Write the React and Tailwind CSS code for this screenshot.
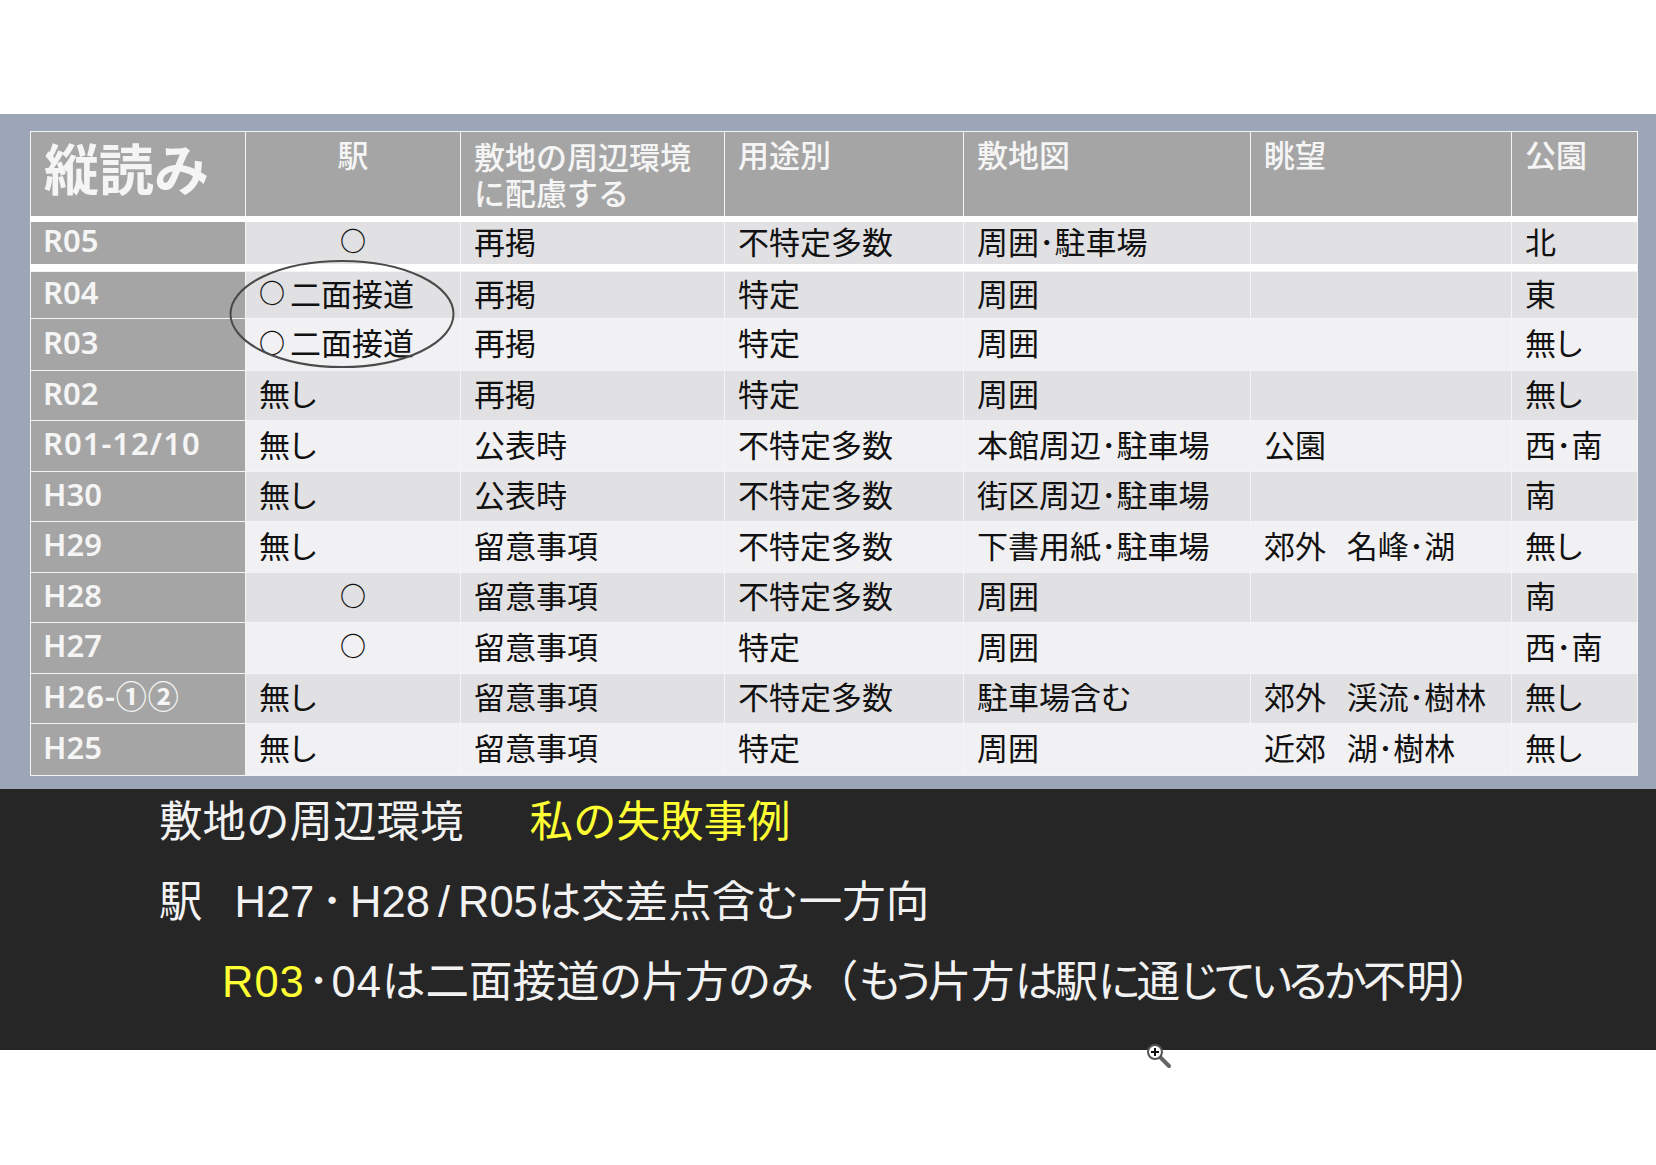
import React from "react";

const jp = "[font-family:'Liberation_Sans','Noto_Sans_CJK_JP',sans-serif]";
const cjk = "[font-family:'Noto_Sans_CJK_JP',sans-serif]";

const line = "border-[#f4f4f6]";
const labelCell = `flex items-center pl-[12px] pb-[5px] bg-[#a5a5a5] border-l ${line} text-[31px] leading-none font-semibold text-[#f5f5f5] [font-family:'Noto_Sans','Noto_Sans_CJK_JP',sans-serif]`;
const bodyCell = `flex items-center border-l ${line} pb-[6px] text-[31px] leading-none text-[#111] whitespace-pre ${cjk} [font-feature-settings:'palt']`;

const rows = [
  { h: "h-[47px]", bg: "bg-[#e1e0e2]", label: "R04", cells: ["○二面接道", "再掲", "特定", "周囲", "", "東"] },
  { h: "h-[52px]", bg: "bg-[#f1f0f3]", label: "R03", cells: ["○二面接道", "再掲", "特定", "周囲", "", "無し"] },
  { h: "h-[50px]", bg: "bg-[#e1e0e2]", label: "R02", cells: ["無し", "再掲", "特定", "周囲", "", "無し"] },
  { h: "h-[51px]", bg: "bg-[#f1f0f3]", label: "R01-12/10", wide: true, cells: ["無し", "公表時", "不特定多数", "本館周辺･駐車場", "公園", "西･南"] },
  { h: "h-[50px]", bg: "bg-[#e1e0e2]", label: "H30", cells: ["無し", "公表時", "不特定多数", "街区周辺･駐車場", "", "南"] },
  { h: "h-[51px]", bg: "bg-[#f1f0f3]", label: "H29", cells: ["無し", "留意事項", "不特定多数", "下書用紙･駐車場", "郊外   名峰･湖", "無し"] },
  { h: "h-[50px]", bg: "bg-[#e1e0e2]", label: "H28", cells: ["○", "留意事項", "不特定多数", "周囲", "", "南"] },
  { h: "h-[51px]", bg: "bg-[#f1f0f3]", label: "H27", cells: ["○", "留意事項", "特定", "周囲", "", "西･南"] },
  { h: "h-[50px]", bg: "bg-[#e1e0e2]", label: "H26-①②", wide: true, cells: ["無し", "留意事項", "不特定多数", "駐車場含む", "郊外   渓流･樹林", "無し"] },
  { h: "h-[52px]", bg: "bg-[#f1f0f3]", label: "H25", cells: ["無し", "留意事項", "特定", "周囲", "近郊   湖･樹林", "無し"] },
];

const columns = "grid grid-cols-[215px_215px_264px_239px_287px_261px_126px]";

// the circle mark is smaller than the kanji beside it
const Mark = () => <span className="inline-block w-[31px] text-left text-[26px] font-bold">○</span>;

const Cell = ({ text, bg }) => {
  if (text === "○") {
    return (
      <div className={`${bodyCell} ${bg} justify-center`}>
        <span className="text-[26px] font-bold">○</span>
      </div>
    );
  }
  return (
    <div className={`${bodyCell} ${bg} pl-[13px]`}>
      {text.startsWith("○") ? (
        <>
          <Mark />
          {text.slice(1)}
        </>
      ) : (
        text
      )}
    </div>
  );
};

const Row = ({ h, bg, label, wide, cells }) => (
  <div className={`${columns} ${h} border-t ${line}`}>
    <div className={`${labelCell} ${wide ? "tracking-[1px]" : ""}`}>{label}</div>
    {cells.map((text, i) => (
      <Cell key={i} text={text} bg={bg} />
    ))}
  </div>
);

const Kana = ({ children }) => <span className="tracking-[-3.5px]">{children}</span>;

const App = () => {
  return (
    <div className={`relative w-[1656px] h-[1165px] bg-white overflow-hidden ${jp}`}>
      <div className="h-[114px]" />

      <div className="h-[675px] bg-[#9da6b6] pt-[17px] pl-[30px]">
        <div className={`w-[1608px] border-b border-r ${line}`}>
          <div className={`${columns} h-[85px] border-t ${line} bg-[#a5a5a5] text-[31px] leading-[36px] font-medium text-[#f5f5f5]`}>
            <div className={`pl-[13px] pt-[9px] border-l ${line} text-[55px] leading-[60px] font-bold`}>縦読み</div>
            <div className={`pt-[7px] border-l ${line} text-center`}>駅</div>
            <div className={`pl-[13px] pt-[9px] border-l ${line}`}>
              敷地の周辺環境
              <br />
              に配慮する
            </div>
            <div className={`pl-[13px] pt-[7px] border-l ${line}`}>用途別</div>
            <div className={`pl-[13px] pt-[7px] border-l ${line}`}>敷地図</div>
            <div className={`pl-[13px] pt-[7px] border-l ${line}`}>眺望</div>
            <div className={`pl-[13px] pt-[7px] border-l ${line}`}>公園</div>
          </div>

          <div className="h-[6px] bg-white" />

          <div className={`${columns} h-[42px]`}>
            <div className={labelCell}>R05</div>
            <Cell text="○" bg="bg-[#e1e0e2]" />
            <Cell text="再掲" bg="bg-[#e1e0e2]" />
            <Cell text="不特定多数" bg="bg-[#e1e0e2]" />
            <Cell text="周囲･駐車場" bg="bg-[#e1e0e2]" />
            <Cell text="" bg="bg-[#e1e0e2]" />
            <Cell text="北" bg="bg-[#e1e0e2]" />
          </div>

          <div className="h-[7px] bg-white" />

          {rows.map((row) => (
            <Row key={row.label} {...row} />
          ))}
        </div>
      </div>

      <div className="h-[261px] bg-[#262626] pt-px pl-[159px] flex flex-col gap-[16px] text-[43.5px] leading-[64px] text-[#f2f2f2] whitespace-pre">
        <div>
          敷地の周辺環境<span className="ml-[66px] text-[#ffff33]">私の失敗事例</span>
        </div>
        <div>
          駅<span className="ml-[32px]">H27<span className="mx-[7px]">･</span>H28<span className="mx-[8px]">/</span>R05</span>は交差点含む一方向
        </div>
        <div className="pl-[63px] [font-feature-settings:'palt']">
          <span className="tracking-[1px] text-[#ffff33]">R03</span>
          <span className="ml-[3px] mr-[2px]">･</span>
          <span className="tracking-[1px]">04</span>は二面接道の片方のみ
          <span className="ml-[22px] mr-[2px]">（</span>
          <Kana>もう</Kana>片方<Kana>は</Kana>駅<Kana>に</Kana>通<Kana>じているか</Kana>不明）
        </div>
      </div>

      {/* ellipse drawn over the R04/R03 cells */}
      <svg className="absolute left-[229px] top-[259px]" width="226" height="110" viewBox="0 0 226 110" fill="none">
        <ellipse cx="113" cy="55" rx="111.5" ry="53" stroke="#4a4a4a" strokeWidth="2" />
      </svg>

      {/* zoom cursor */}
      <svg className="absolute left-[1146px] top-[1043px]" width="26" height="26" viewBox="0 0 26 26" fill="none">
        <line x1="14" y1="14" x2="23" y2="23" stroke="#666" strokeWidth="4" strokeLinecap="round" />
        <circle cx="9" cy="9" r="7" fill="#fff" stroke="#555" strokeWidth="2" />
        <path d="M5 9h8M9 5v8" stroke="#111" strokeWidth="2" />
      </svg>
    </div>
  );
};

export default App;
